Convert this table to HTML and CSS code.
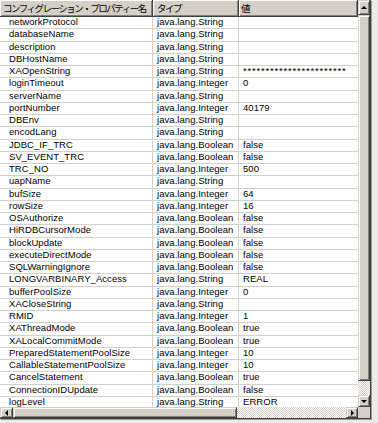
FILE: index.html
```html
<!DOCTYPE html>
<html lang="ja">
<head>
<meta charset="utf-8">
<title>プロパティー</title>
<link rel="stylesheet" href="styles.css">
</head>
<body>
<div class="frame">
  <div class="table">
    <div class="head">
      <div class="hc c1">コンフィグレーション・プロパティー名</div>
      <div class="hc c2">タイプ</div>
      <div class="hc c3">値</div>
    </div>
    <div class="rows">
      <div class="row"><div class="cell c1">networkProtocol</div><div class="cell c2">java.lang.String</div><div class="cell c3"></div></div>
      <div class="row"><div class="cell c1">databaseName</div><div class="cell c2">java.lang.String</div><div class="cell c3"></div></div>
      <div class="row"><div class="cell c1">description</div><div class="cell c2">java.lang.String</div><div class="cell c3"></div></div>
      <div class="row"><div class="cell c1">DBHostName</div><div class="cell c2">java.lang.String</div><div class="cell c3"></div></div>
      <div class="row"><div class="cell c1">XAOpenString</div><div class="cell c2">java.lang.String</div><div class="cell c3 stars">***********************</div></div>
      <div class="row"><div class="cell c1">loginTimeout</div><div class="cell c2">java.lang.Integer</div><div class="cell c3">0</div></div>
      <div class="row"><div class="cell c1">serverName</div><div class="cell c2">java.lang.String</div><div class="cell c3"></div></div>
      <div class="row"><div class="cell c1">portNumber</div><div class="cell c2">java.lang.Integer</div><div class="cell c3">40179</div></div>
      <div class="row"><div class="cell c1">DBEnv</div><div class="cell c2">java.lang.String</div><div class="cell c3"></div></div>
      <div class="row"><div class="cell c1">encodLang</div><div class="cell c2">java.lang.String</div><div class="cell c3"></div></div>
      <div class="row"><div class="cell c1">JDBC_IF_TRC</div><div class="cell c2">java.lang.Boolean</div><div class="cell c3">false</div></div>
      <div class="row"><div class="cell c1">SV_EVENT_TRC</div><div class="cell c2">java.lang.Boolean</div><div class="cell c3">false</div></div>
      <div class="row"><div class="cell c1">TRC_NO</div><div class="cell c2">java.lang.Integer</div><div class="cell c3">500</div></div>
      <div class="row"><div class="cell c1">uapName</div><div class="cell c2">java.lang.String</div><div class="cell c3"></div></div>
      <div class="row"><div class="cell c1">bufSize</div><div class="cell c2">java.lang.Integer</div><div class="cell c3">64</div></div>
      <div class="row"><div class="cell c1">rowSize</div><div class="cell c2">java.lang.Integer</div><div class="cell c3">16</div></div>
      <div class="row"><div class="cell c1">OSAuthorize</div><div class="cell c2">java.lang.Boolean</div><div class="cell c3">false</div></div>
      <div class="row"><div class="cell c1">HiRDBCursorMode</div><div class="cell c2">java.lang.Boolean</div><div class="cell c3">false</div></div>
      <div class="row"><div class="cell c1">blockUpdate</div><div class="cell c2">java.lang.Boolean</div><div class="cell c3">false</div></div>
      <div class="row"><div class="cell c1">executeDirectMode</div><div class="cell c2">java.lang.Boolean</div><div class="cell c3">false</div></div>
      <div class="row"><div class="cell c1">SQLWarningIgnore</div><div class="cell c2">java.lang.Boolean</div><div class="cell c3">false</div></div>
      <div class="row"><div class="cell c1">LONGVARBINARY_Access</div><div class="cell c2">java.lang.String</div><div class="cell c3">REAL</div></div>
      <div class="row"><div class="cell c1">bufferPoolSize</div><div class="cell c2">java.lang.Integer</div><div class="cell c3">0</div></div>
      <div class="row"><div class="cell c1">XACloseString</div><div class="cell c2">java.lang.String</div><div class="cell c3"></div></div>
      <div class="row"><div class="cell c1">RMID</div><div class="cell c2">java.lang.Integer</div><div class="cell c3">1</div></div>
      <div class="row"><div class="cell c1">XAThreadMode</div><div class="cell c2">java.lang.Boolean</div><div class="cell c3">true</div></div>
      <div class="row"><div class="cell c1">XALocalCommitMode</div><div class="cell c2">java.lang.Boolean</div><div class="cell c3">true</div></div>
      <div class="row"><div class="cell c1">PreparedStatementPoolSize</div><div class="cell c2">java.lang.Integer</div><div class="cell c3">10</div></div>
      <div class="row"><div class="cell c1">CallableStatementPoolSize</div><div class="cell c2">java.lang.Integer</div><div class="cell c3">10</div></div>
      <div class="row"><div class="cell c1">CancelStatement</div><div class="cell c2">java.lang.Boolean</div><div class="cell c3">true</div></div>
      <div class="row"><div class="cell c1">ConnectionIDUpdate</div><div class="cell c2">java.lang.Boolean</div><div class="cell c3">false</div></div>
      <div class="row"><div class="cell c1">logLevel</div><div class="cell c2">java.lang.String</div><div class="cell c3">ERROR</div></div>
    </div>
  </div>
  <div class="vscroll">
    <div class="btn up"><span class="arrow a-up"></span></div>
    <div class="thumb vthumb"></div>
    <div class="track"></div>
    <div class="btn down"><span class="arrow a-down"></span></div>
  </div>
  <div class="hscroll">
    <div class="btn left"><span class="arrow a-left"></span></div>
    <div class="thumb hthumb"></div>
    <div class="track"></div>
    <div class="btn right"><span class="arrow a-right"></span></div>
  </div>
  <div class="corner"></div>
</div>
</body>
</html>
```
FILE: styles.css
```css
html, body {
  margin: 0;
  padding: 0;
}
body {
  width: 378px;
  height: 423px;
  overflow: hidden;
  background: #ecebe8;
  font-family: "Liberation Sans", Arial, sans-serif;
  color: #000;
}
.frame {
  display: grid;
  grid-template-columns: 358px 12px;
  grid-template-rows: 407px 11px;
  width: 370px;
  border-right: 1px solid #404040;
  border-bottom: 1px solid #404040;
  box-shadow: 1px 1px 0 #9a9a9a;
}
.table {
  grid-column: 1;
  grid-row: 1;
  background: #fff;
  overflow: hidden;
}
.head {
  display: flex;
  height: 17px;
  background: #d4d0c8;
}
.hc {
  box-sizing: border-box;
  height: 17px;
  padding-left: 3px;
  border-right: 1px solid #404040;
  border-bottom: 1px solid #404040;
  box-shadow: inset 1px 1px #fff, inset -1px -1px #808080;
  font-family: "Noto Sans CJK JP", sans-serif;
  font-size: 9.5px;
  letter-spacing: -1.5px;
  line-height: 16px;
  white-space: nowrap;
  overflow: hidden;
}
.hc.c2 { padding-left: 4px; }
.hc.c3 { padding-left: 2px; }
.c1 { width: 153px; flex: none; }
.c2 { width: 86px; flex: none; }
.c3 { flex: 1; min-width: 0; }
.row {
  display: flex;
  box-sizing: border-box;
  height: 12.25px;
  border-bottom: 1px solid #d4d0c8;
}
.cell {
  box-sizing: border-box;
  border-right: 1px solid #d4d0c8;
  padding-left: 4px;
  font-size: 9.5px;
  letter-spacing: 0.05px;
  line-height: 10px;
  white-space: nowrap;
  overflow: hidden;
}
.cell.c1 { padding-left: 9px; }
.cell.c3 { border-right: none; }
.stars { letter-spacing: 0.8px; }
.vscroll {
  grid-column: 2;
  grid-row: 1;
  display: flex;
  flex-direction: column;
}
.hscroll {
  grid-column: 1;
  grid-row: 2;
  display: flex;
}
.corner {
  grid-column: 2;
  grid-row: 2;
  background: #d4d0c8;
}
.btn, .thumb {
  box-sizing: border-box;
  background: #d4d0c8;
  border: 1px solid;
  border-color: #d4d0c8 #404040 #404040 #d4d0c8;
  box-shadow: inset 1px 1px #fff, inset -1px -1px #808080;
  flex: none;
}
.btn {
  display: flex;
  align-items: center;
  justify-content: center;
}
.btn.up { height: 15px; }
.btn.down { height: 12px; }
.btn.left { width: 13px; }
.btn.right { width: 12px; }
.vthumb { height: 366px; }
.hthumb { width: 224px; }
.track {
  flex: 1;
  background: repeating-conic-gradient(#fff 0 25%, #d4d0c8 0 50%) 0 0 / 2px 2px;
}
.arrow {
  width: 0;
  height: 0;
  display: block;
}
.a-up {
  border-left: 3px solid transparent;
  border-right: 3px solid transparent;
  border-bottom: 3px solid #000;
}
.a-down {
  border-left: 3px solid transparent;
  border-right: 3px solid transparent;
  border-top: 3px solid #000;
}
.a-left {
  border-top: 3px solid transparent;
  border-bottom: 3px solid transparent;
  border-right: 3px solid #000;
}
.a-right {
  border-top: 3px solid transparent;
  border-bottom: 3px solid transparent;
  border-left: 3px solid #000;
}
```
